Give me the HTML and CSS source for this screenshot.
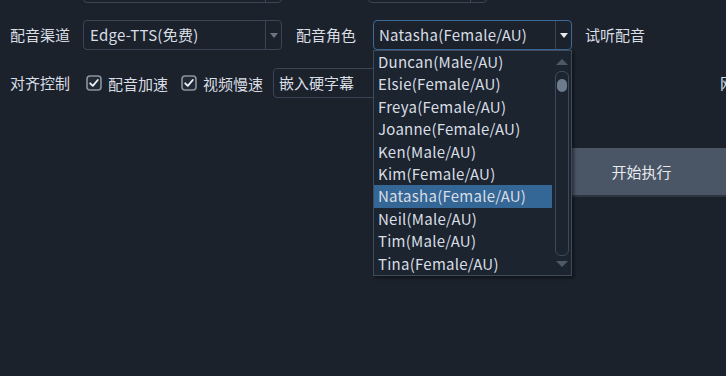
FILE: index.html
```html
<!DOCTYPE html>
<html lang="zh">
<head>
<meta charset="utf-8">
<link rel="stylesheet" href="styles.css">
</head>
<body>
<div class="page">
  <div class="row row-top">
    <div class="combo combo-a"><span class="combo-text"></span><span class="combo-btn"></span></div>
    <div class="combo combo-b"><span class="combo-text"></span><span class="combo-btn"></span></div>
  </div>

  <div class="row row-1">
    <span class="label">配音渠道</span>
    <div class="combo combo-channel">
      <span class="combo-text latin">Edge-TTS(免费)</span>
      <span class="combo-btn"><span class="tri tri-dim"></span></span>
    </div>
    <span class="label label-role">配音角色</span>
    <div class="combo combo-role focused">
      <span class="combo-text latin">Natasha(Female/AU)</span>
      <span class="combo-btn"><span class="tri tri-bright"></span></span>
      <div class="popup">
        <ul class="list">
          <li>Duncan(Male/AU)</li>
          <li>Elsie(Female/AU)</li>
          <li>Freya(Female/AU)</li>
          <li>Joanne(Female/AU)</li>
          <li>Ken(Male/AU)</li>
          <li>Kim(Female/AU)</li>
          <li class="selected">Natasha(Female/AU)</li>
          <li>Neil(Male/AU)</li>
          <li>Tim(Male/AU)</li>
          <li>Tina(Female/AU)</li>
        </ul>
        <div class="scroll">
          <span class="sarrow up"></span>
          <div class="track"><span class="handle"></span></div>
          <span class="sarrow down"></span>
        </div>
      </div>
    </div>
    <span class="label label-listen">试听配音</span>
  </div>

  <div class="row row-2">
    <span class="label">对齐控制</span>
    <label class="check">
      <svg class="cb" width="16" height="16" viewBox="0 0 16 16"><rect x="1" y="1" width="14" height="14" rx="3" fill="#222a35" stroke="#8a939e" stroke-width="1.6"/><path d="M4.2 8.3 L6.8 10.9 L11.8 5" fill="none" stroke="#f2f4f6" stroke-width="1.8" stroke-linecap="round" stroke-linejoin="round"/></svg>
      <span>配音加速</span>
    </label>
    <label class="check">
      <svg class="cb" width="16" height="16" viewBox="0 0 16 16"><rect x="1" y="1" width="14" height="14" rx="3" fill="#222a35" stroke="#8a939e" stroke-width="1.6"/><path d="M4.2 8.3 L6.8 10.9 L11.8 5" fill="none" stroke="#f2f4f6" stroke-width="1.8" stroke-linecap="round" stroke-linejoin="round"/></svg>
      <span>视频慢速</span>
    </label>
    <div class="combo combo-sub">
      <span class="combo-text">嵌入硬字幕</span>
      <span class="combo-btn"><span class="tri tri-dim"></span></span>
    </div>
    <span class="label label-far">网络代理</span>
  </div>

  <div class="row row-start">
    <button class="start">开始执行</button>
  </div>
</div>
</body>
</html>
```

FILE: styles.css
```css
html, body {
  margin: 0;
  padding: 0;
  background: #1b222c;
  overflow: hidden;
  width: 726px;
  height: 376px;
}
body {
  font-family: "Noto Sans CJK SC", "Noto Sans", sans-serif;
  font-size: 15px;
  color: #d9dee4;
}
.page {
  margin-top: -27px;
  display: flex;
  flex-direction: column;
}
.row {
  display: flex;
  align-items: center;
  white-space: nowrap;
}
.row-top { height: 30px; }
.row-1 { height: 30px; margin-top: 17px; }
.row-2 { height: 30px; margin-top: 18px; }
.row-start { margin-top: 50px; padding-left: 557px; }

.label {
  line-height: 30px;
  flex: none;
}
.row-1 > .label:first-child,
.row-2 > .label:first-child {
  margin-left: 10px;
  width: 73px;
}
.label-role { margin-left: 14px; width: 77px; }
.label-listen { margin-left: 13px; }
.label-far { margin-left: 248px; }

.combo {
  position: relative;
  box-sizing: border-box;
  height: 30px;
  width: 199px;
  border: 1px solid #3a4656;
  border-radius: 4px;
  display: flex;
  align-items: center;
  flex: none;
}
.combo-a { margin-left: 83px; }
.combo-b { margin-left: 86px; width: 119px; }
.combo-text {
  flex: 1;
  padding-left: 6px;
  line-height: 28px;
}
.latin { letter-spacing: 0.25px; }
.combo-btn {
  width: 15px;
  height: 28px;
  border-left: 1px solid #3a4656;
  display: flex;
  align-items: center;
  justify-content: center;
}
.combo.focused {
  border-color: #3b6a98;
}
.combo.focused .combo-text { padding-left: 5px; }
.tri {
  width: 0;
  height: 0;
  border-left: 4px solid transparent;
  border-right: 4px solid transparent;
  border-top: 5px solid #6b7685;
  margin-top: 1px;
}
.tri-bright { border-top-color: #e8ecf0; }

.check {
  display: flex;
  align-items: center;
  gap: 6px;
  margin-left: 3px;
}
.check + .check { margin-left: 13px; }
.cb { display: block; }
.combo-sub { margin-left: 10px; }
.combo-sub .combo-text { padding-left: 5px; }

.popup {
  position: absolute;
  top: 29px;
  left: -1px;
  width: 199px;
  height: 226px;
  box-sizing: border-box;
  border: 1px solid #3f4b5b;
  background: #1c2430;
  display: flex;
  box-shadow: 2px 2px 3px rgba(0, 0, 0, 0.45);
  z-index: 5;
}
.list {
  list-style: none;
  margin: 0;
  padding: 0;
  width: 178px;
}
.list li {
  height: 22.4px;
  line-height: 22.4px;
  padding-left: 4px;
  letter-spacing: 0.25px;
}
.list li.selected {
  background: #346696;
}
.scroll {
  flex: 1;
  display: flex;
  flex-direction: column;
  align-items: center;
  padding-top: 8px;
}
.sarrow {
  width: 0;
  height: 0;
  border-left: 6px solid transparent;
  border-right: 6px solid transparent;
}
.sarrow.up { border-bottom: 6px solid #4e5967; }
.sarrow.down { border-top: 6px solid #4e5967; margin-top: 5px; }
.track {
  margin-top: 6px;
  box-sizing: border-box;
  width: 14px;
  height: 185px;
  border: 1px solid #3e4a5a;
  border-radius: 6px;
  display: flex;
  justify-content: center;
  padding-top: 7px;
}
.handle {
  width: 10px;
  height: 13px;
  border-radius: 5px;
  background: #6c7c8d;
}

.start {
  width: 169px;
  height: 49px;
  border: none;
  border-bottom: 2px solid #2c3440;
  background: #4a5566;
  color: #e6e9ed;
  font-family: "Noto Sans CJK SC", "Noto Sans", sans-serif;
  font-size: 15px;
  padding: 0;
}
```
